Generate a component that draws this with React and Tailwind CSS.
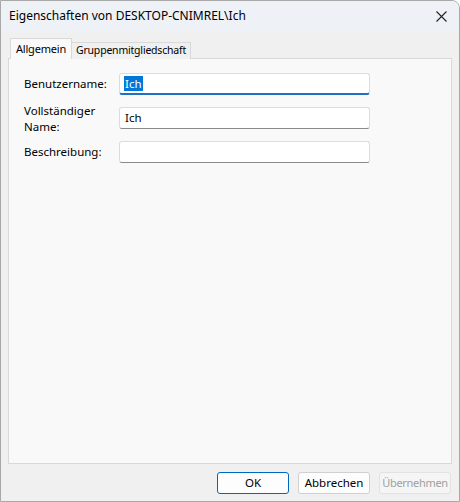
import React from "react";

const Field = ({ label, value, active, labelClass = "pt-[3px]" }) => (
  <div className="flex items-start h-[22px]">
    <div className={`w-[95px] leading-[16px] ${labelClass}`}>{label}</div>
    <div
      className={`h-[22px] w-[251px] bg-white border border-[#dcdcdc] rounded-[3px] px-[5px] flex items-center ${
        active ? "border-b-2 border-b-[#1f6fc5]" : "border-b-[#8a8a8a]"
      }`}
    >
      {active ? (
        <span className="bg-[#0078d7] text-white leading-[15px] px-[1px] -ml-[1px]">{value}</span>
      ) : (
        <span>{value}</span>
      )}
    </div>
  </div>
);

export default function App() {
  return (
    <div
      className="w-[460px] h-[502px] bg-[#f0f0f0] text-[11.5px] text-black flex flex-col border border-[#a8a8a8] rounded-tr-[8px] overflow-hidden"
      style={{ fontFamily: '"Noto Sans", "Open Sans", sans-serif' }}
    >
      {/* title bar */}
      <div className="h-[30px] bg-[#eef2f7] flex items-center justify-between pl-[8px] pr-[12px] shrink-0">
        <span className="text-[12px]">Eigenschaften von DESKTOP-CNIMREL\Ich</span>
        <svg width="11" height="11" viewBox="0 0 11 11" stroke="#222" strokeWidth="1.1">
          <path d="M0.5 0.5 L10.5 10.5 M10.5 0.5 L0.5 10.5" />
        </svg>
      </div>

      {/* tabs */}
      <div className="px-[7px] pt-[8px] flex-1 flex flex-col">
        <div className="flex items-end h-[20px] relative z-10">
          <div className="h-[21px] px-[5px] bg-[#f9f9f9] border border-[#d9d9d9] border-b-0 ml-[2px] flex items-center text-[11px] tracking-[-0.2px]">
            Allgemein
          </div>
          <div className="h-[17px] px-[4px] bg-[#f0f0f0] border border-[#d9d9d9] border-b-0 border-l-0 flex items-center text-[10.5px] tracking-[-0.2px]">
            Gruppenmitgliedschaft
          </div>
        </div>
        <div className="h-[406px] -mt-[1px] bg-[#f9f9f9] border border-[#d9d9d9] pl-[15px] pt-[14px] flex flex-col gap-[12px]">
          <Field label="Benutzername:" value="Ich" active />
          <Field
            labelClass="-mt-[4px]"
            label={
              <>
                Vollständiger
                <br />
                Name:
              </>
            }
            value="Ich"
          />
          <Field label="Beschreibung:" value="" />
        </div>

        {/* buttons */}
        <div className="flex justify-end gap-[9px] mt-[8px] pr-[1px]">
          <button className="w-[72px] h-[22px] bg-[#fdfdfd] border border-[#0067c0] rounded-[3px]">OK</button>
          <button className="w-[72px] h-[22px] bg-[#fdfdfd] border border-[#d0d0d0] rounded-[3px]">Abbrechen</button>
          <button className="w-[72px] h-[22px] bg-[#f5f5f5] border border-[#e2e2e2] rounded-[3px] text-[#a0a0a0] text-[11px] tracking-[-0.3px] px-0">
            Übernehmen
          </button>
        </div>
      </div>
    </div>
  );
}
